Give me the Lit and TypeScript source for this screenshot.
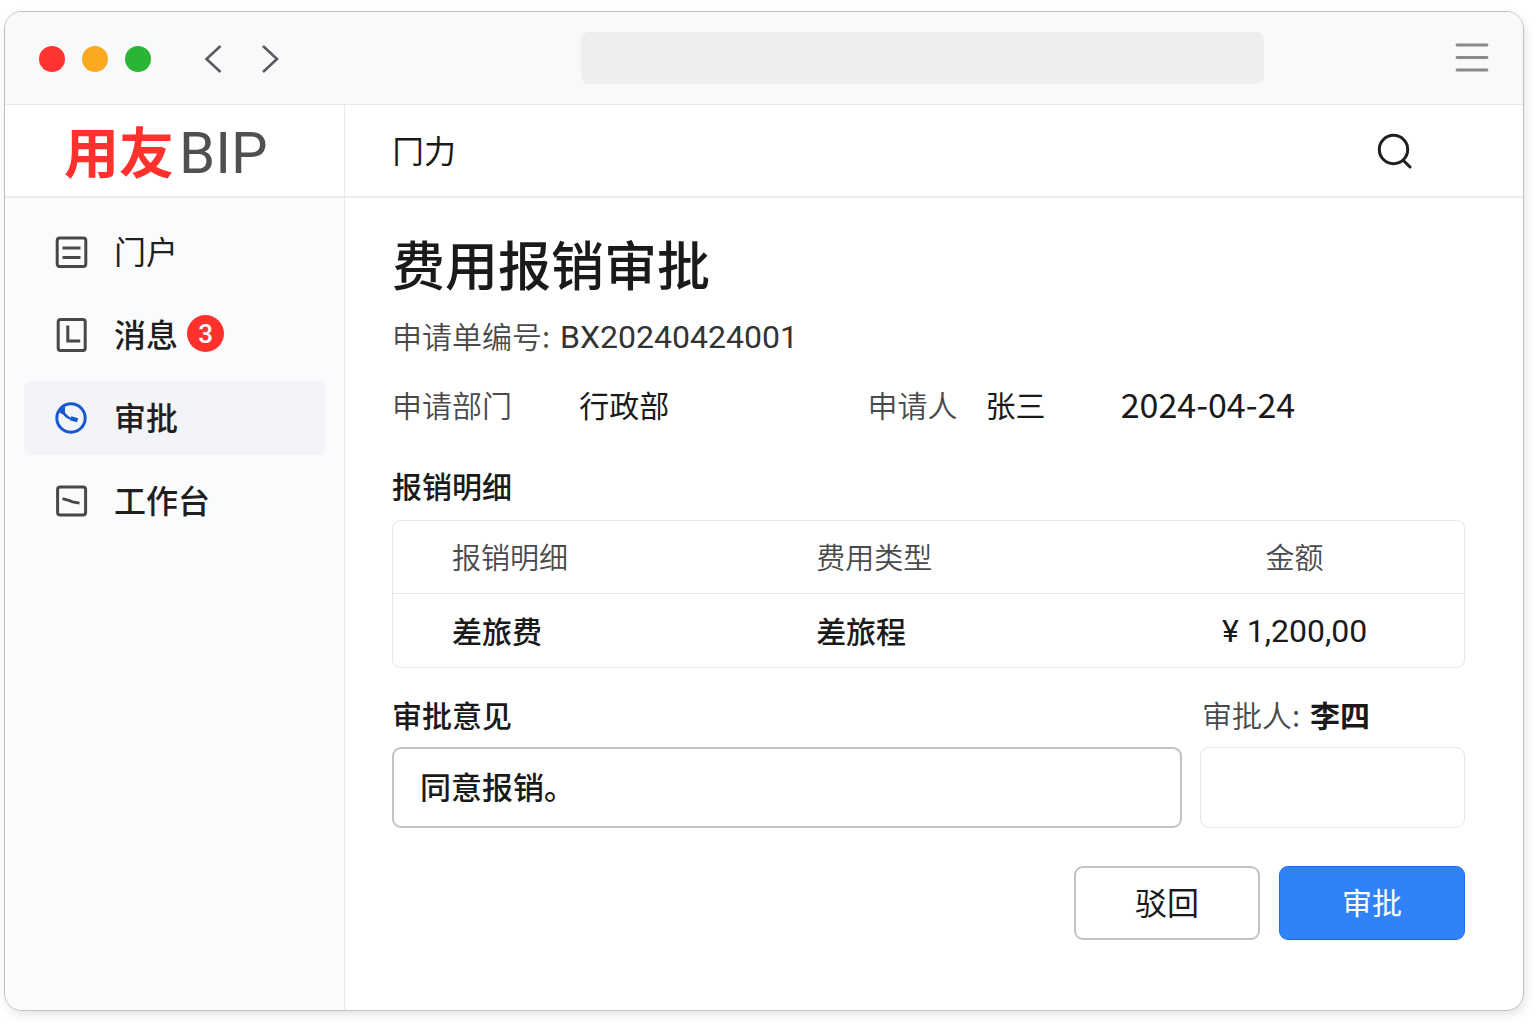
import { LitElement, html, css, svg } from "lit";
import { customElement, state } from "lit/decorators.js";
import { classMap } from "lit/directives/class-map.js";

const icons: Record<string, unknown> = {
  portal: svg`
    <rect x="2.2" y="3" width="28.6" height="28.6" rx="2.6" />
    <path d="M7.500 13h18M7.500 22.600h18" />`,
  message: svg`
    <rect x="3.2" y="1.6" width="27" height="31" rx="2.6" />
    <path d="M12.800 7.500v15.600h12.400" />`,
  approve: svg`
    <circle cx="16" cy="17" r="14.2" stroke-width="3" />
    <path d="M6 6.500C8 12.500 11.500 16.200 16 18" stroke-width="2.4" />
    <path d="M4 11.500L10 4.500L10 12L13 16Z" fill="currentColor" stroke="none" />
    <path d="M15.800 17.400l6.800 1.800" stroke-width="4.2" />`,
  workbench: svg`
    <rect x="2.6" y="3" width="28" height="28" rx="2.6" />
    <path d="M7.500 14.600l7 2 3 1.200 7 1.400" stroke-width="2.8" />`,
};

interface NavItem {
  id: string;
  label: string;
  strong?: boolean;
  badge?: number;
}

const navItems: NavItem[] = [
  { id: "portal", label: "门户" },
  { id: "message", label: "消息", strong: true, badge: 3 },
  { id: "approve", label: "审批", strong: true },
  { id: "workbench", label: "工作台", strong: true },
];

const expenses = [{ name: "差旅费", type: "差旅程", amount: "1,200,00" }];

@customElement("app-root")
export class AppRoot extends LitElement {
  @state() private active = "approve";

  static styles = css`
    :host {
      display: flex;
      box-sizing: border-box;
      min-height: 100vh;
      padding: 11px 12px 13px 4px;
      background: #fff;
      color: #1a1a1a;
      font-family: "Noto Sans CJK SC", "Noto Sans", sans-serif;
      font-size: 30px;
      line-height: 40px;
    }
    * {
      box-sizing: border-box;
    }
    h1,
    h2,
    p {
      margin: 0;
    }
    button,
    input {
      font: inherit;
      color: inherit;
    }
    svg {
      display: block;
      fill: none;
      stroke: currentColor;
    }
    .window {
      flex: 1;
      display: flex;
      flex-direction: column;
      min-width: 0;
      border: 1px solid #bfc0c2;
      border-radius: 18px;
      background: #fff;
      box-shadow: 2px 4px 10px rgba(0, 0, 0, 0.1);
      overflow: hidden;
    }
    .titlebar {
      display: grid;
      grid-template-columns: 576fr 683fr 259fr;
      align-items: center;
      height: 93px;
      background: #f8f9fb;
      border-bottom: 1px solid #e8e9eb;
    }
    .controls {
      display: flex;
      align-items: center;
      padding: 1px 0 0 34px;
    }
    .lights {
      display: flex;
      gap: 17px;
      margin-right: 33px;
    }
    .light {
      width: 26px;
      height: 26px;
      border-radius: 50%;
    }
    .red {
      background: #ff3431;
    }
    .amber {
      background: #fba920;
    }
    .green {
      background: #2bb534;
    }
    .icon-button {
      display: grid;
      place-items: center;
      padding: 0;
      border: 0;
      background: none;
      color: #5a5b5e;
      cursor: pointer;
    }
    .arrow {
      width: 57px;
      height: 40px;
    }
    .address {
      width: 100%;
      height: 52px;
      padding: 0 20px;
      border: 0;
      border-radius: 8px;
      background: #edeef0;
      font-size: 24px;
    }
    .menu {
      justify-self: end;
      margin-right: 34px;
      color: #88898b;
    }
    .body {
      flex: 1;
      display: grid;
      grid-template-columns: 340px minmax(0, 1fr);
    }
    .sidebar {
      display: flex;
      flex-direction: column;
      border-right: 1px solid #e8e9eb;
      background: #fafbfd;
    }
    .brand {
      display: flex;
      align-items: baseline;
      gap: 5px;
      height: 93px;
      padding: 4px 0 0 59px;
      border-bottom: 2px solid #ececee;
      background: #fff;
      font-size: 55px;
      line-height: 80px;
    }
    .brand-name {
      color: #fe312d;
      font-weight: 700;
    }
    .brand-suffix {
      color: #505052;
      font-family: Roboto, sans-serif;
      font-size: 58px;
    }
    .nav {
      display: flex;
      flex-direction: column;
      gap: 9px;
      padding: 17px 18px 20px 19px;
    }
    .nav-item {
      display: flex;
      align-items: center;
      height: 74px;
      padding-left: 31px;
      border-radius: 8px;
      color: #1f1f1f;
      font-size: 32px;
      text-decoration: none;
    }
    .nav-item.strong {
      font-weight: 500;
    }
    .nav-item.active {
      background: #f2f4f8;
    }
    .nav-icon {
      width: 33px;
      height: 34px;
      margin-right: 26px;
      color: #48484a;
      stroke-width: 3;
    }
    .nav-label {
      padding-bottom: 4px;
    }
    .active .nav-icon {
      color: #1757cf;
    }
    .badge {
      width: 37px;
      height: 37px;
      margin: 0 0 3px 9px;
      border-radius: 50%;
      background: #fe312d;
      color: #fff;
      font-family: Roboto, sans-serif;
      font-size: 26px;
      font-weight: 500;
      line-height: 38px;
      text-align: center;
    }
    .topbar {
      display: flex;
      align-items: center;
      justify-content: space-between;
      height: 93px;
      padding: 0 111px 0 47px;
      border-bottom: 2px solid #ececee;
      font-size: 32px;
    }
    .topbar-title {
      padding-bottom: 4px;
    }
    .search {
      color: #1f1f1f;
    }
    .content {
      padding: 29px 58px 40px 47px;
    }
    .title {
      font-size: 53px;
      font-weight: 500;
      line-height: 72px;
    }
    .label {
      color: #4a4a4c;
      font-weight: 350;
    }
    .number {
      display: flex;
      align-items: baseline;
      gap: 10px;
      height: 40px;
      margin-top: 16px;
    }
    .number-value {
      color: #333;
      font-family: Roboto, sans-serif;
      font-size: 32px;
    }
    .meta {
      display: grid;
      grid-template-columns: 187fr 288fr 118fr 135fr 344fr;
      align-items: center;
      margin-top: 29px;
    }
    .date {
      font-size: 34px;
    }
    .heading {
      font-size: 30px;
      font-weight: 500;
      line-height: 40px;
    }
    .details {
      margin-top: 41px;
    }
    .table {
      width: 100%;
      margin-top: 15px;
      table-layout: fixed;
      border: 1px solid #e6e6e8;
      border-radius: 8px;
      border-spacing: 0;
    }
    .table th,
    .table td {
      height: 73px;
      padding: 0 0 2px 59px;
      text-align: left;
      font-weight: 500;
    }
    .table th {
      border-bottom: 1px solid #e6e6e8;
      color: #4a4a4c;
      font-size: 29px;
      font-weight: 350;
    }
    .table .wide {
      width: 34%;
    }
    .table .amount {
      padding-left: 4px;
      text-align: center;
    }
    .table td.amount {
      padding-bottom: 0;
      font-family: Roboto, sans-serif;
      font-size: 32px;
      font-weight: 400;
    }
    .currency {
      margin-right: 8px;
    }
    .opinion {
      display: grid;
      grid-template-columns: 790fr 265fr;
      gap: 13px 18px;
      margin-top: 26px;
    }
    .approver {
      display: flex;
      gap: 10px;
      padding-left: 2px;
    }
    .approver-name {
      font-weight: 700;
    }
    .field {
      width: 100%;
      height: 81px;
      padding: 0 26px 4px;
      border: 2px solid #c2c2c4;
      border-radius: 9px;
      background: #fff;
      font-weight: 500;
      font-size: 31px;
    }
    .field.pale {
      border: 1px solid #e6e6e8;
    }
    .actions {
      display: flex;
      justify-content: flex-end;
      gap: 19px;
      margin-top: 38px;
    }
    .button {
      width: 186px;
      height: 74px;
      padding: 0 0 4px;
      border: 2px solid #c2c2c4;
      border-radius: 9px;
      background: #fff;
      font-size: 32px;
      cursor: pointer;
    }
    .button.primary {
      border: 1px solid #1a6df0;
      background: #3082f9;
      color: #fff;
      font-size: 30px;
    }
  `;

  private renderNavItem(item: NavItem) {
    const active = item.id === this.active;
    return html`
      <a
        href="#${item.id}"
        class=${classMap({ "nav-item": true, strong: !!item.strong, active })}
        aria-current=${active ? "page" : "false"}
        @click=${(e: Event) => {
          e.preventDefault();
          this.active = item.id;
        }}
      >
        <svg class="nav-icon" viewBox="0 0 33 34" aria-hidden="true">${icons[item.id]}</svg>
        <span class="nav-label">${item.label}</span>
        ${item.badge ? html`<span class="badge">${item.badge}</span>` : ""}
      </a>
    `;
  }

  render() {
    return html`
      <div class="window">
        <header class="titlebar">
          <div class="controls">
            <div class="lights">
              <span class="light red"></span>
              <span class="light amber"></span>
              <span class="light green"></span>
            </div>
            <button class="icon-button arrow" aria-label="后退">
              <svg width="20" height="30" viewBox="0 0 20 30" stroke-width="2.6">
                <path d="M17.500 2L3.500 15l14 13" />
              </svg>
            </button>
            <button class="icon-button arrow" aria-label="前进">
              <svg width="20" height="30" viewBox="0 0 20 30" stroke-width="2.6">
                <path d="M3 2l14 13-14 13" />
              </svg>
            </button>
          </div>
          <input class="address" type="text" aria-label="地址" />
          <button class="icon-button menu" aria-label="菜单">
            <svg width="34" height="32" viewBox="0 0 34 32" stroke-width="2.800" stroke-linecap="round">
              <path d="M2 3h30M2 15.500h30M2 28h30" />
            </svg>
          </button>
        </header>
        <div class="body">
          <aside class="sidebar">
            <div class="brand">
              <span class="brand-name">用友</span>
              <span class="brand-suffix">BIP</span>
            </div>
            <nav class="nav">${navItems.map((item) => this.renderNavItem(item))}</nav>
          </aside>
          <main>
            <div class="topbar">
              <span class="topbar-title">冂力</span>
              <button class="icon-button search" aria-label="搜索">
                <svg width="35" height="36" viewBox="0 0 35 36" stroke-width="3" stroke-linecap="round">
                  <circle cx="16.500" cy="16.500" r="14.200" />
                  <path d="M26.500 27.500l6.500 6.500" />
                </svg>
              </button>
            </div>
            <div class="content">
              <h1 class="title">费用报销审批</h1>
              <p class="number">
                <span class="label">申请单编号:</span>
                <span class="number-value">BX20240424001</span>
              </p>
              <div class="meta">
                <span class="label">申请部门</span>
                <span>行政部</span>
                <span class="label">申请人</span>
                <span>张三</span>
                <time class="date" datetime="2024-04-24">2024-04-24</time>
              </div>
              <section class="details">
                <h2 class="heading">报销明细</h2>
                <table class="table">
                  <thead>
                    <tr>
                      <th class="wide" scope="col">报销明细</th>
                      <th class="wide" scope="col">费用类型</th>
                      <th class="amount" scope="col">金额</th>
                    </tr>
                  </thead>
                  <tbody>
                    ${expenses.map(
                      (row) => html`
                        <tr>
                          <td>${row.name}</td>
                          <td>${row.type}</td>
                          <td class="amount"><span class="currency">¥</span>${row.amount}</td>
                        </tr>
                      `
                    )}
                  </tbody>
                </table>
              </section>
              <section class="opinion">
                <label class="heading" for="opinion">审批意见</label>
                <label class="approver" for="signature">
                  <span class="label">审批人:</span>
                  <span class="approver-name">李四</span>
                </label>
                <input class="field" id="opinion" type="text" value="同意报销。" />
                <input class="field pale" id="signature" type="text" />
              </section>
              <div class="actions">
                <button class="button">驳回</button>
                <button class="button primary">审批</button>
              </div>
            </div>
          </main>
        </div>
      </div>
    `;
  }
}
